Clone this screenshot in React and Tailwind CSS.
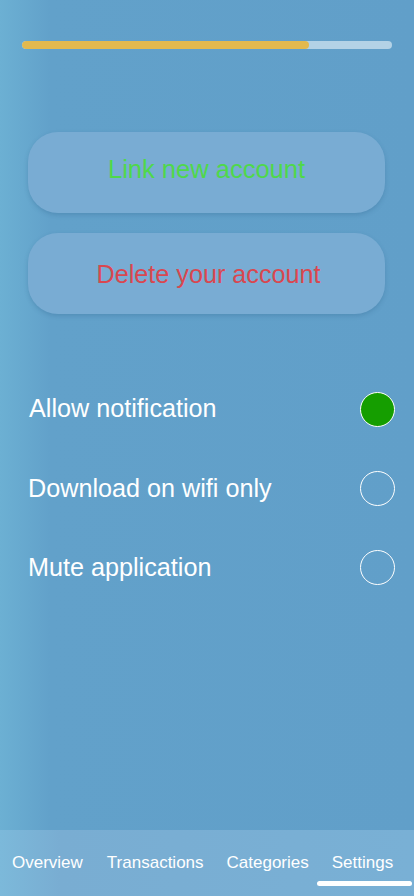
export default function App() {
  const settings = [
    { label: "Allow notification", on: true },
    { label: "Download on wifi only", on: false },
    { label: "Mute application", on: false },
  ];

  return (
    <div
      className="relative w-[414px] h-[896px] overflow-hidden flex flex-col bg-[#619fc9] bg-[linear-gradient(90deg,#6cb0d3_0px,#62a1ca_50px,#619fc9_100%)]"
      style={{ fontFamily: '"Liberation Sans", Arial, sans-serif' }}
    >
      {/* progress */}
      <div className="pt-[41px] px-[22px]">
        <div className="h-[8px] w-[370px] rounded-full bg-[#b3d2e6] overflow-hidden">
          <div className="h-full w-[77.5%] rounded-full bg-[#e3b94e]" />
        </div>
      </div>

      {/* account buttons */}
      <div className="mt-[83px] px-[28px] flex flex-col gap-[20px]">
        <button className="h-[81px] w-[357px] rounded-[30px] bg-[#79acd3] shadow-[0_2px_4px_rgba(40,90,130,0.25)] text-[25.5px] text-[#4fd84a] pb-[6px]">
          Link new account
        </button>
        <button className="h-[81px] w-[357px] rounded-[30px] bg-[#79acd3] shadow-[0_2px_4px_rgba(40,90,130,0.25)] text-[25.2px] text-[#d9474f] pt-[3px] pl-[4px]">
          Delete your account
        </button>
      </div>

      {/* toggles */}
      <div className="mt-[78px] flex flex-col gap-[44px] pl-[28px] pr-[19px]">
        {settings.map((s, i) => (
          <div key={s.label} className="flex items-center justify-between h-[35px]">
            <span className={`text-[25.2px] text-white ${i === 0 ? "pl-[1px] -mt-[2px]" : ""}`}>{s.label}</span>
            <span
              className={`w-[35px] h-[35px] rounded-full border border-white ${
                s.on ? "bg-[#159e00]" : ""
              }`}
            />
          </div>
        ))}
      </div>

      <div className="flex-1" />

      {/* tab bar */}
      <div className="relative h-[66px] bg-[#79b1d5] bg-[linear-gradient(90deg,#7cb9da_0px,#79add2_60px,#79b0d5_100%)] flex items-start pt-[20px] text-[17px] text-white">
        <span className="ml-[12px]">Overview</span>
        <span className="ml-[24px]">Transactions</span>
        <span className="ml-[23px]">Categories</span>
        <span className="ml-[23px]">Settings</span>
        <div className="absolute left-[317px] top-[51px] h-[5px] w-[95px] rounded-full bg-white" />
      </div>
    </div>
  );
}
